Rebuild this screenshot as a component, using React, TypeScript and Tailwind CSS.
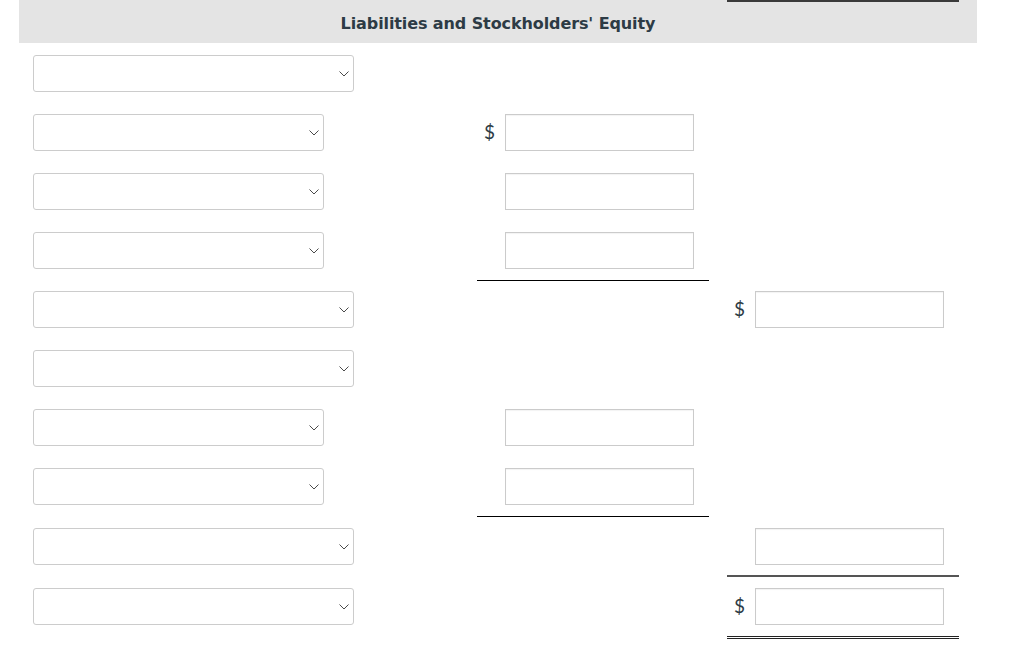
import React from "react";

type Row = {
  wide: boolean;
  mid: "none" | "input" | "dollar";
  right: "none" | "input" | "dollar";
  h: string;
  pt: string;
  midLine?: boolean;
  rightLine?: "single" | "double";
};

const rows: Row[] = [
  { wide: true, mid: "none", right: "none", h: "h-[59px]", pt: "pt-[12px]" },
  { wide: false, mid: "dollar", right: "none", h: "h-[59px]", pt: "pt-[12px]" },
  { wide: false, mid: "input", right: "none", h: "h-[59px]", pt: "pt-[12px]" },
  { wide: false, mid: "input", right: "none", h: "h-[61px]", pt: "pt-[12px]", midLine: true },
  { wide: true, mid: "none", right: "dollar", h: "h-[57px]", pt: "pt-[10px]" },
  { wide: true, mid: "none", right: "none", h: "h-[59px]", pt: "pt-[12px]" },
  { wide: false, mid: "input", right: "none", h: "h-[59px]", pt: "pt-[12px]" },
  { wide: false, mid: "input", right: "none", h: "h-[61px]", pt: "pt-[12px]", midLine: true },
  { wide: true, mid: "none", right: "input", h: "h-[60px]", pt: "pt-[11px]", rightLine: "single" },
  { wide: true, mid: "none", right: "dollar", h: "h-[62px]", pt: "pt-[11px]", rightLine: "double" },
];

const font = { fontFamily: '"DejaVu Sans", Verdana, sans-serif' };
const dollarFont = { fontFamily: 'Lato, "Open Sans", sans-serif' };

function Chevron() {
  return (
    <svg width="10" height="6" viewBox="0 0 10 6" fill="none">
      <path d="M0.5 0.5 L5 5 L9.5 0.5" stroke="#4a4a4a" strokeWidth="1" />
    </svg>
  );
}

function Select({ wide }: { wide: boolean }) {
  return (
    <div
      className={`${wide ? "w-[321px]" : "w-[291px]"} h-[37px] rounded-[3px] border border-[#cccccc] bg-white flex items-center justify-end pr-[4px]`}
    >
      <Chevron />
    </div>
  );
}

function Box() {
  return <div className="w-[189px] h-[37px] border border-[#cbcbcb] bg-white shadow-[inset_0_1px_1px_rgba(0,0,0,0.05)]" />;
}

function Dollar() {
  return (
    <span className="text-[19px] font-normal leading-[35px] text-[#2d3b45] mr-[10px]" style={dollarFont}>
      $
    </span>
  );
}

function Cell({ kind, line }: { kind: "none" | "input" | "dollar"; line?: "single" | "double" | "mid" }) {
  const lineCls =
    line === "mid"
      ? "border-b border-black"
      : line === "single"
      ? "border-b-2 border-[#555555]"
      : line === "double"
      ? "border-b-[3px] border-double border-[#222222]"
      : "";
  return (
    <div className={`w-[232px] h-full flex justify-end pr-[15px] ${lineCls}`}>
      {kind === "dollar" && <Dollar />}
      {kind !== "none" && <Box />}
    </div>
  );
}

export default function App() {
  return (
    <div className="w-[1024px] h-[665px] bg-white overflow-hidden" style={font}>
      <div className="ml-[19px] w-[958px]">
        <div className="relative h-[43px] bg-[#e4e4e4] flex items-center justify-center pt-[4px]">
          <span className="text-[16px] font-bold text-[#2d3b45] tracking-[-0.1px]" style={font}>
            Liabilities and Stockholders' Equity
          </span>
          <div className="absolute top-0 left-[708px] w-[232px] h-[2px] bg-[#3a3a3a]" />
        </div>
        {rows.map((r, i) => (
          <div key={i} className={`flex ${r.h}`}>
            <div className={`w-[458px] pl-[14px] ${r.pt}`}>
              <Select wide={r.wide} />
            </div>
            <div className={`h-full ${r.pt}`}>
              <Cell kind={r.mid} line={r.midLine ? "mid" : undefined} />
            </div>
            <div className="w-[18px]" />
            <div className={`h-full ${r.pt}`}>
              <Cell kind={r.right} line={r.rightLine} />
            </div>
          </div>
        ))}
      </div>
    </div>
  );
}
